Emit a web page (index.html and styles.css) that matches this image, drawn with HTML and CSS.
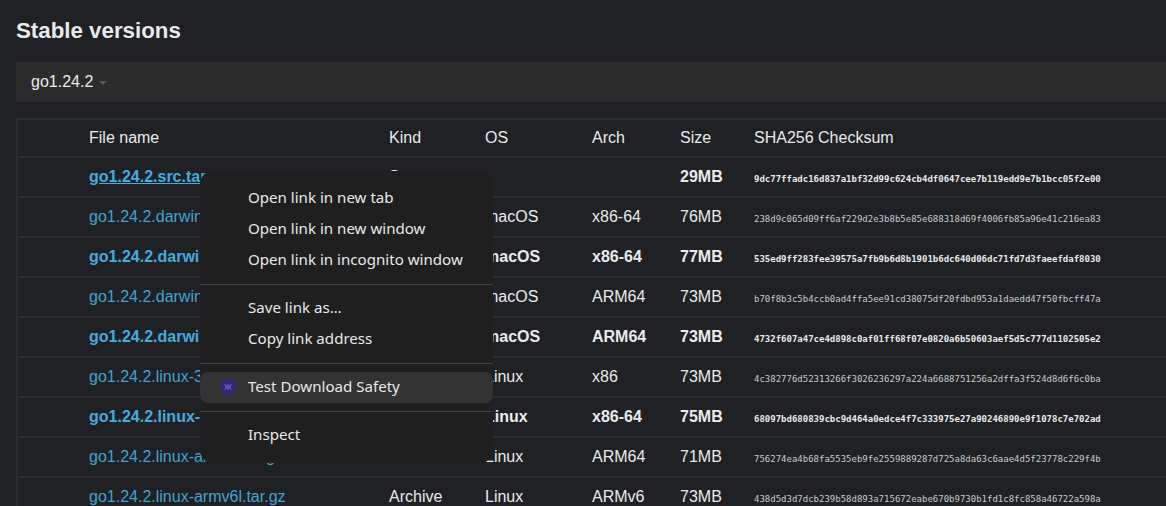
FILE: index.html
```html
<!DOCTYPE html>
<html lang="en">
<head>
<meta charset="utf-8">
<title>Stable versions</title>
<link rel="stylesheet" href="styles.css">
</head>
<body>
<h2 class="title">Stable versions</h2>
<div class="version-bar"><span>go1.24.2</span><i class="caret"></i></div>
<table class="files">
<colgroup><col class="c-pad"><col class="c-name"><col class="c-kind"><col class="c-os"><col class="c-arch"><col class="c-size"><col class="c-sum"></colgroup>
<thead><tr><th></th><th>File name</th><th>Kind</th><th>OS</th><th>Arch</th><th>Size</th><th>SHA256 Checksum</th></tr></thead>
<tbody>
<tr class="first"><td></td><td><a href="#">go1.24.2.src.tar.gz</a></td><td>Source</td><td></td><td></td><td>29MB</td><td><code>9dc77ffadc16d837a1bf32d99c624cb4df0647cee7b119edd9e7b1bcc05f2e00</code></td></tr>
<tr><td></td><td><a href="#">go1.24.2.darwin-amd64.tar.gz</a></td><td>Archive</td><td>macOS</td><td>x86-64</td><td>76MB</td><td><code>238d9c065d09ff6af229d2e3b8b5e85e688318d69f4006fb85a96e41c216ea83</code></td></tr>
<tr class="first"><td></td><td><a class="plain" href="#">go1.24.2.darwin-amd64.pkg</a></td><td>Installer</td><td>macOS</td><td>x86-64</td><td>77MB</td><td><code>535ed9ff283fee39575a7fb9b6d8b1901b6dc640d06dc71fd7d3faeefdaf8030</code></td></tr>
<tr><td></td><td><a href="#">go1.24.2.darwin-arm64.tar.gz</a></td><td>Archive</td><td>macOS</td><td>ARM64</td><td>73MB</td><td><code>b70f8b3c5b4ccb0ad4ffa5ee91cd38075df20fdbd953a1daedd47f50fbcff47a</code></td></tr>
<tr class="first"><td></td><td><a class="plain" href="#">go1.24.2.darwin-arm64.pkg</a></td><td>Installer</td><td>macOS</td><td>ARM64</td><td>73MB</td><td><code>4732f607a47ce4d898c0af01ff68f07e0820a6b50603aef5d5c777d1102505e2</code></td></tr>
<tr><td></td><td><a href="#">go1.24.2.linux-386.tar.gz</a></td><td>Archive</td><td>Linux</td><td>x86</td><td>73MB</td><td><code>4c382776d52313266f3026236297a224a6688751256a2dffa3f524d8d6f6c0ba</code></td></tr>
<tr class="first"><td></td><td><a class="plain" href="#">go1.24.2.linux-amd64.tar.gz</a></td><td>Archive</td><td>Linux</td><td>x86-64</td><td>75MB</td><td><code>68097bd680839cbc9d464a0edce4f7c333975e27a90246890e9f1078c7e702ad</code></td></tr>
<tr><td></td><td><a href="#">go1.24.2.linux-arm64.tar.gz</a></td><td>Archive</td><td>Linux</td><td>ARM64</td><td>71MB</td><td><code>756274ea4b68fa5535eb9fe2559889287d725a8da63c6aae4d5f23778c229f4b</code></td></tr>
<tr><td></td><td><a href="#">go1.24.2.linux-armv6l.tar.gz</a></td><td>Archive</td><td>Linux</td><td>ARMv6</td><td>73MB</td><td><code>438d5d3d7dcb239b58d893a715672eabe670b9730b1fd1c8fc858a46722a598a</code></td></tr>
</tbody>
</table>
<div class="menu">
<div class="item">Open link in new tab</div>
<div class="item">Open link in new window</div>
<div class="item">Open link in incognito window</div>
<hr class="sep">
<div class="item">Save link as…</div>
<div class="item">Copy link address</div>
<hr class="sep">
<div class="item active">
<svg class="ext-icon" viewBox="0 0 16 16" aria-hidden="true"><circle cx="8" cy="8" r="8" fill="#33277a"/><path d="M4.5 5.5l2 1.5h3l2-1.5M4.5 10.5l2-1.5h3l2 1.5M6 7v2M10 7v2M8 5v1M8 10v1" fill="none" stroke="#6459c4" stroke-width="1.1"/><path d="M6 8h4" stroke="#a3566f" stroke-width="1.3"/></svg>
Test Download Safety</div>
<hr class="sep">
<div class="item">Inspect</div>
</div>
</body>
</html>
```
FILE: styles.css
```css
* { box-sizing: border-box; }
html, body { margin: 0; height: 506px; overflow: hidden; }
body {
  background: #202124;
  color: #e8eaed;
  font: 16px/24px "Liberation Sans", Arial, sans-serif;
  padding: 16px 0 0 16px;
  position: relative;
}
.title {
  margin: 0 0 16px;
  font-size: 22.3px;
  line-height: 30px;
  font-weight: 700;
  color: #e8eaed;
}
.version-bar {
  height: 40px;
  background: #2c2c2c;
  padding: 8px 15px;
  display: flex;
  align-items: center;
  gap: 6px;
}
.caret {
  width: 0; height: 0;
  margin-top: 2px;
  border: 4px solid transparent;
  border-top-color: #55585c;
  border-bottom-width: 0;
}
.files {
  margin-top: 16px;
  border-collapse: collapse;
  table-layout: fixed;
  width: 1166px;
}
.c-pad { width: 64px; }
.c-name { width: 300px; }
.c-kind { width: 96px; }
.c-os { width: 107px; }
.c-arch { width: 88px; }
.c-size { width: 74px; }
.c-sum { width: 437px; }
.files th, .files td {
  padding: 0 8px;
  border: 2px solid #2c2d30;
  border-width: 2px 0;
  text-align: left;
  font-weight: 400;
  white-space: nowrap;
  overflow: hidden;
}
.files th { height: 38px; }
.files td { height: 40px; }
.files th:first-child, .files td:first-child { border-left-width: 2px; }
.files a { color: #42a3d3; text-decoration: none; }
.first td { font-weight: 700; }
.first td:nth-child(2) a { font-weight: 700; color: #46abdf; }
.first:first-child a { text-decoration: underline; }
code {
  font: 9px/12px "DejaVu Sans Mono", monospace;
  color: #c4ccd2;
}
.first code { color: #e8eaed; font-weight: 700; }
.menu {
  position: absolute;
  left: 200px; top: 171px;
  width: 293px; height: 292px;
  padding: 12px 0;
  background: #1f1f1f;
  border-radius: 13px;
  font: 15.1px/29px "Noto Sans", sans-serif;
  color: #e8e8e8;
}
.item {
  height: 31px;
  padding-left: 48px;
  position: relative;
  white-space: nowrap;
}
.item.active { background: #333333; border-radius: 8px; }
.ext-icon { position: absolute; left: 20px; top: 7px; width: 16px; height: 16px; }
.sep { height: 1px; margin: 8px 0; border: 0; background: #444; }
```
